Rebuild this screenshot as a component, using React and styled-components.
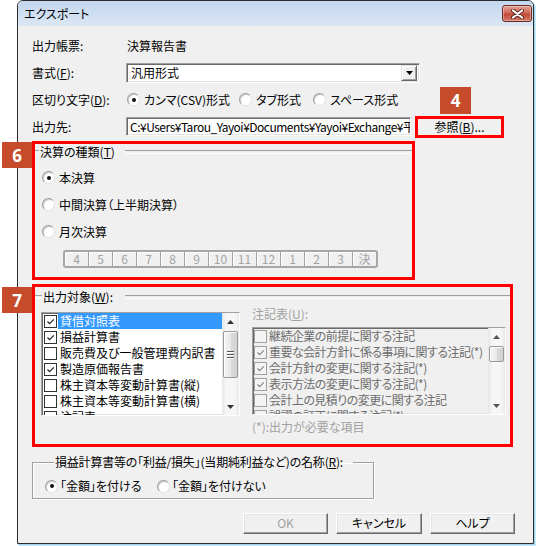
import React from "react";
import styled, { createGlobalStyle } from "styled-components";

const GlobalStyle = createGlobalStyle`
  html, body { margin: 0; padding: 0; background: #fff; }
  body {
    font-family: "Noto Sans CJK JP", "Noto Sans", sans-serif;
    font-size: 12px;
    color: #000;
    font-feature-settings: "palt";
  }
  * { box-sizing: border-box; }
  u { text-decoration: underline; text-underline-offset: 1px; }
`;

const Page = styled.div`
  width: 537px;
  height: 546px;
  padding-left: 17px;
  overflow: hidden;
`;

const Window = styled.div`
  width: 517px;
  height: 544px;
  border: 1px solid #2b2b2b;
  border-radius: 6px 6px 0 0;
  background: #f0f0f0;
  box-shadow: 1px 1px 0 #9fd6ef, 2px 2px 0 #cdebf8;
  display: flex;
  flex-direction: column;
`;

const TitleBar = styled.div`
  height: 25px;
  flex: none;
  display: flex;
  justify-content: space-between;
  align-items: flex-start;
  padding: 4px 1px 0 6px;
  border-radius: 5px 5px 0 0;
  background: linear-gradient(#c3d7ee, #dbe7f5);
`;

const Title = styled.div`
  line-height: 16px;
  font-size: 12px;
  margin-top: 1px;
`;

const CloseButton = styled.div`
  width: 30px;
  height: 17px;
  border: 1px solid #6b2a22;
  border-radius: 3px;
  background: linear-gradient(#e4a497, #d06a5a 45%, #c24a39 55%, #d27a68);
  box-shadow: inset 0 0 0 1px rgba(255, 255, 255, 0.35);
  display: flex;
  align-items: center;
  justify-content: center;
`;

const Body = styled.div`
  flex: 1;
  display: flex;
  flex-direction: column;
  padding: 6px 18px 0 14px;
`;

const FormGrid = styled.div`
  display: grid;
  grid-template-columns: 94px 1fr;
  grid-auto-rows: 27px;
  align-items: center;
`;

const Text = styled.div`
  line-height: 16px;
  white-space: nowrap;
  padding-left: ${(p) => p.$pad || 0}px;
`;

const Sunken = styled.div`
  height: ${(p) => p.$h}px;
  width: ${(p) => p.$w}px;
  border: 1px solid;
  border-color: #a0a0a0 #fff #fff #a0a0a0;
  box-shadow: inset 1px 1px #696969, inset -1px -1px #e3e3e3;
  background: ${(p) => p.$bg || "#fff"};
`;

const SelectBox = styled(Sunken)`
  display: flex;
  align-items: center;
  padding: 2px 2px 2px 4px;
  line-height: 16px;
`;

const SelectText = styled.div`
  flex: 1;
`;

const DropButton = styled.div`
  width: 16px;
  height: 16px;
  background: #f0f0f0;
  border: 1px solid;
  border-color: #e3e3e3 #696969 #696969 #e3e3e3;
  box-shadow: inset 1px 1px #fff, inset -1px -1px #a0a0a0;
  display: flex;
  align-items: center;
  justify-content: center;
`;

const PathBox = styled(Sunken)`
  padding: 0 3px;
  line-height: 17px;
  overflow: hidden;
  white-space: nowrap;
  font-feature-settings: normal;
  letter-spacing: -0.5px;
`;

const RadioGroup = styled.div`
  display: grid;
  grid-template-columns: ${(p) => p.$cols};
  align-items: center;
  padding-left: ${(p) => p.$pad || 0}px;
`;

const Option = styled.div`
  display: flex;
  align-items: center;
  gap: ${(p) => p.$gap ?? 4}px;
  height: ${(p) => p.$h || 16}px;
  line-height: 16px;
  white-space: nowrap;
`;

const RadioCircle = styled.span`
  width: 13px;
  height: 13px;
  flex: none;
  border-radius: 50%;
  border: 1px solid;
  border-color: #9a9a9a #e2e2e2 #e2e2e2 #9a9a9a;
  background: radial-gradient(circle at 60% 60%, #fff 0 50%, #ececec 100%);
  box-shadow: inset 1px 1px 0 #cfcfcf;
  display: flex;
  align-items: center;
  justify-content: center;
  &::after {
    content: "";
    width: 4px;
    height: 4px;
    border-radius: 50%;
    background: ${(p) => (p.$on ? "#111" : "transparent")};
  }
`;

const PathRow = styled.div`
  display: flex;
  align-items: center;
  gap: 4px;
`;

const Callout = styled.div`
  position: relative;
  flex: none;
  width: ${(p) => p.$w}px;
  height: ${(p) => p.$h}px;
  margin-top: ${(p) => p.$mt || 0}px;
  border: 3px solid #ff0000;
`;

const Badge = styled.div`
  position: absolute;
  z-index: 2;
  left: ${(p) => p.$x}px;
  top: ${(p) => p.$y}px;
  width: ${(p) => p.$w || 30}px;
  height: ${(p) => p.$hh || 26}px;
  background: #c54b2b;
  color: #fff;
  font: bold 17px "Open Sans", "Liberation Sans", sans-serif;
  display: flex;
  align-items: center;
  justify-content: center;
`;

const BrowseButton = styled.div`
  width: 100%;
  height: 100%;
  background: #f0f0f0;
  text-align: center;
  line-height: 16px;
`;

const GroupHeader = styled.div`
  display: flex;
  align-items: center;
  height: 16px;
  margin-top: ${(p) => p.$mt || 0}px;
  &::before,
  &::after {
    content: "";
    height: 2px;
    border-top: 1px solid #a0a0a0;
    border-bottom: 1px solid #fff;
  }
  &::before {
    width: ${(p) => p.$lead}px;
  }
  &::after {
    flex: 1;
    margin-left: ${(p) => p.$gap}px;
  }
`;

const GroupLabel = styled.span`
  line-height: 16px;
  padding-left: 1px;
  white-space: nowrap;
`;

const RadioStack = styled.div`
  display: flex;
  flex-direction: column;
  padding-left: 7px;
  margin-top: 4px;
`;

const MonthStrip = styled.div`
  display: flex;
  width: 315px;
  height: 18px;
  margin: 5px 0 0 28px;
  border: 2px solid #a6a6a6;
  border-radius: 3px;
  box-shadow: inset 1px 1px #fff;
`;

const MonthCell = styled.div`
  flex: 1;
  text-align: center;
  line-height: 14px;
  color: #a3a3a3;
  font-size: 12px;
  & + & {
    border-left: 1px solid #a3a3a3;
    box-shadow: inset 1px 0 #fff;
  }
`;

const TargetRow = styled.div`
  display: flex;
  gap: 12px;
  padding-left: 6px;
  margin-top: 1px;
`;

const ListBox = styled(Sunken)`
  display: flex;
  margin-top: ${(p) => p.$mt || 0}px;
  overflow: hidden;
`;

const ListItems = styled.div`
  flex: 1;
  min-width: 0;
  overflow: hidden;
  padding-left: ${(p) => p.$pad}px;
  letter-spacing: ${(p) => p.$ls || 0}px;
`;

const ListItem = styled.div`
  display: flex;
  align-items: center;
  height: 16px;
  flex: none;
  color: ${(p) => (p.$dim ? "#6d6d6d" : "#000")};
`;

const ItemLabel = styled.span`
  flex: 1;
  height: 16px;
  line-height: 16px;
  margin-left: ${(p) => p.$ml}px;
  padding-left: 2px;
  white-space: nowrap;
  overflow: hidden;
  background: ${(p) => (p.$sel ? "#3399ff" : "transparent")};
  color: ${(p) => (p.$sel ? "#fff" : "inherit")};
`;

const CheckBox = styled.span`
  width: 13px;
  height: 13px;
  flex: none;
  border: 1px solid ${(p) => (p.$dim ? "#a0a0a0" : "#333")};
  background: ${(p) => (p.$dim ? "#f4f4f4" : "#fff")};
  display: flex;
  align-items: center;
  justify-content: center;
`;

const ScrollBar = styled.div`
  width: 17px;
  flex: none;
  display: flex;
  flex-direction: column;
  background: linear-gradient(90deg, #e6e6e6, #f6f6f6 25%, #f6f6f6 75%, #e9e9e9);
`;

const ArrowButton = styled.div`
  height: 17px;
  flex: none;
  display: flex;
  align-items: center;
  justify-content: center;
`;

const Track = styled.div`
  flex: 1;
  padding-top: ${(p) => p.$offset}px;
`;

const Thumb = styled.div`
  height: ${(p) => p.$h}px;
  margin: 0 1px;
  border: 1px solid #9a9a9a;
  border-radius: 2px;
  background: linear-gradient(90deg, #f4f4f4, #e9e9e9 50%, #dadada 51%, #d2d2d2);
  box-shadow: inset 1px 1px #fff;
  display: flex;
  flex-direction: column;
  align-items: center;
  justify-content: center;
  gap: 2px;
`;

const Grip = styled.span`
  width: 7px;
  height: 1px;
  background: #555;
  box-shadow: 0 1px #fff;
`;

const NoteColumn = styled.div`
  width: 254px;
  display: flex;
  flex-direction: column;
`;

const DimText = styled.div`
  line-height: 16px;
  color: #a2a2a2;
  margin-top: ${(p) => p.$mt || 0}px;
  white-space: nowrap;
`;

const Fieldset = styled.fieldset`
  width: 342px;
  margin: 8px 0 0;
  padding: 9px 0 4px 12px;
  min-inline-size: 0;
  border: 1px solid #a0a0a0;
  box-shadow: inset 1px 1px #fff, 1px 1px #fff;
`;

const Legend = styled.legend`
  margin-left: 9px;
  padding: 0 10px 0 1px;
  line-height: 14px;
  font-size: 12px;
  letter-spacing: -0.2px;
`;

const ButtonRow = styled.div`
  display: flex;
  justify-content: flex-end;
  gap: 8px;
  margin-top: 14px;
`;

const Button = styled.div`
  width: ${(p) => p.$w}px;
  height: 21px;
  background: #f0f0f0;
  border: 1px solid;
  border-color: #fff #696969 #696969 #fff;
  box-shadow: inset -1px -1px #a0a0a0, inset 1px 1px #e3e3e3;
  text-align: center;
  line-height: 18px;
  color: ${(p) => (p.$disabled ? "#a0a0a0" : "#000")};
`;

const Tri = ({ up, color = "#333" }) => (
  <svg width="7" height="4" viewBox="0 0 7 4">
    <path d={up ? "M0 4 L3.5 0 L7 4 Z" : "M0 0 L7 0 L3.5 4 Z"} fill={color} />
  </svg>
);

const Check = ({ dim }) => (
  <svg width="11" height="11" viewBox="0 0 11 11">
    <path d="M2.5 5.5 L4.6 7.6 L8.8 3.3" fill="none" stroke={dim ? "#8a8a8a" : "#222"} strokeWidth="1.2" />
  </svg>
);

const Radio = ({ on, children, gap }) => (
  <Option $gap={gap}>
    <RadioCircle $on={on} />
    <span>{children}</span>
  </Option>
);

const Scroll = ({ offset, h, grip, arrow }) => (
  <ScrollBar>
    <ArrowButton><Tri up color={arrow} /></ArrowButton>
    <Track $offset={offset}>
      <Thumb $h={h}>{grip && (<><Grip /><Grip /><Grip /></>)}</Thumb>
    </Track>
    <ArrowButton><Tri color={arrow} /></ArrowButton>
  </ScrollBar>
);

const months = ["4", "5", "6", "7", "8", "9", "10", "11", "12", "1", "2", "3", "決"];

const targets = [
  { t: "貸借対照表", c: true, s: true },
  { t: "損益計算書", c: true },
  { t: "販売費及び一般管理費内訳書" },
  { t: "製造原価報告書", c: true },
  { t: "株主資本等変動計算書(縦)" },
  { t: "株主資本等変動計算書(横)" },
  { t: "注記表" },
];

const notes = [
  { t: "継続企業の前提に関する注記" },
  { t: "重要な会計方針に係る事項に関する注記(*)", c: true },
  { t: "会計方針の変更に関する注記(*)", c: true },
  { t: "表示方法の変更に関する注記(*)", c: true },
  { t: "会計上の見積りの変更に関する注記" },
  { t: "誤謬の訂正に関する注記(*)" },
];

export default function App() {
  return (
    <>
      <GlobalStyle />
      <Page>
        <Window>
          <TitleBar>
            <Title>エクスポート</Title>
            <CloseButton>
              <svg width="13" height="10" viewBox="0 0 13 10">
                <path d="M2 1.5 L11 8.5 M11 1.5 L2 8.5" stroke="#5a241c" strokeWidth="4" strokeLinecap="round" />
                <path d="M2 1.5 L11 8.5 M11 1.5 L2 8.5" stroke="#fff" strokeWidth="2.2" strokeLinecap="round" />
              </svg>
            </CloseButton>
          </TitleBar>
          <Body>
            <FormGrid>
              <Text>出力帳票:</Text>
              <Text $pad={1}>決算報告書</Text>

              <Text>書式(<u>F</u>):</Text>
              <SelectBox $w={294} $h={20}>
                <SelectText>汎用形式</SelectText>
                <DropButton><Tri color="#000" /></DropButton>
              </SelectBox>

              <Text>区切り文字(<u>D</u>):</Text>
              <RadioGroup $cols="112px 74px auto" $pad={1}>
                <Radio on>カンマ(CSV)形式</Radio>
                <Radio>タブ形式</Radio>
                <Radio>スペース形式</Radio>
              </RadioGroup>

              <Text>出力先:</Text>
              <PathRow>
                <PathBox $w={285} $h={19}>C:¥Users¥Tarou_Yayoi¥Documents¥Yayoi¥Exchange¥平成</PathBox>
                <Callout $w={89} $h={22}>
                  <Badge $x={22} $y={-32} $w={31} $hh={27}>4</Badge>
                  <BrowseButton>参照(<u>B</u>)...</BrowseButton>
                </Callout>
              </PathRow>
            </FormGrid>

            <Callout $w={383} $h={139} $mt={1}>
              <Badge $x={-33} $y={-2}>6</Badge>
              <GroupHeader $lead={4} $gap={10}>
                <GroupLabel>決算の種類(<u>T</u>)</GroupLabel>
              </GroupHeader>
              <RadioStack>
                <Option $h={27} $gap={4}><RadioCircle $on /><span>本決算</span></Option>
                <Option $h={27} $gap={4}><RadioCircle /><span>中間決算（上半期決算）</span></Option>
                <Option $h={27} $gap={4}><RadioCircle /><span>月次決算</span></Option>
              </RadioStack>
              <MonthStrip>
                {months.map((m, i) => (
                  <MonthCell key={i}>{m}</MonthCell>
                ))}
              </MonthStrip>
            </Callout>

            <Callout $w={481} $h={163} $mt={4}>
              <Badge $x={-33} $y={0}>7</Badge>
              <GroupHeader $lead={7} $gap={12} $mt={2}>
                <GroupLabel>出力対象(<u>W</u>):</GroupLabel>
              </GroupHeader>
              <TargetRow>
                <ListBox $w={199} $h={104} $mt={6}>
                  <ListItems $pad={2}>
                    {targets.map((it) => (
                      <ListItem key={it.t}>
                        <CheckBox>{it.c && <Check />}</CheckBox>
                        <ItemLabel $ml={1} $sel={it.s}>{it.t}</ItemLabel>
                      </ListItem>
                    ))}
                  </ListItems>
                  <Scroll offset={1} h={47} grip arrow="#333" />
                </ListBox>
                <NoteColumn>
                  <DimText>注記表(<u>U</u>):</DimText>
                  <ListBox $w={254} $h={88} $mt={5} $bg="#f0f0f0">
                    <ListItems $pad={1} $ls={-0.55}>
                      {notes.map((it) => (
                        <ListItem key={it.t} $dim>
                          <CheckBox $dim>{it.c && <Check dim />}</CheckBox>
                          <ItemLabel $ml={0}>{it.t}</ItemLabel>
                        </ListItem>
                      ))}
                    </ListItems>
                    <Scroll offset={1} h={16} arrow="#555" />
                  </ListBox>
                  <DimText $mt={4}>(*):出力が必要な項目</DimText>
                </NoteColumn>
              </TargetRow>
            </Callout>

            <Fieldset>
              <Legend>損益計算書等の「利益/損失」(当期純利益など)の名称(<u>R</u>):</Legend>
              <RadioGroup $cols="112px auto">
                <Radio on gap={2}>「金額」を付ける</Radio>
                <Radio gap={2}>「金額」を付けない</Radio>
              </RadioGroup>
            </Fieldset>

            <ButtonRow>
              <Button $w={85} $disabled>OK</Button>
              <Button $w={86}>キャンセル</Button>
              <Button $w={85}>ヘルプ</Button>
            </ButtonRow>
          </Body>
        </Window>
      </Page>
    </>
  );
}
